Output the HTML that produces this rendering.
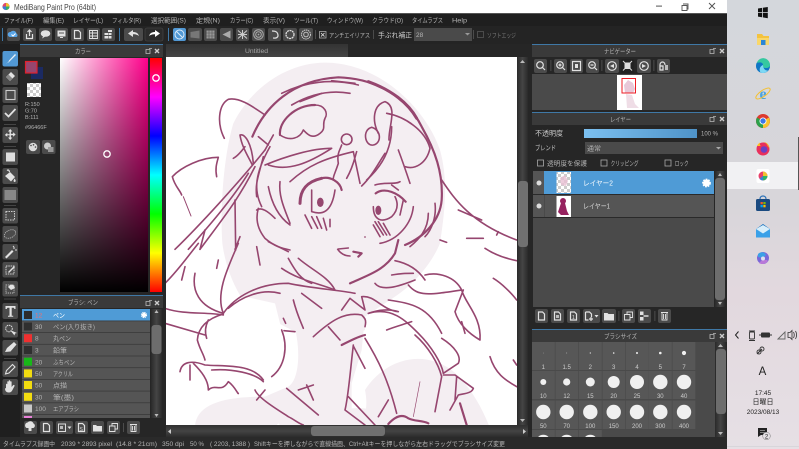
<!DOCTYPE html>
<html><head><meta charset="utf-8"><style>
html,body{margin:0;padding:0;width:799px;height:449px;overflow:hidden;background:#262626}
svg{display:block;position:absolute;left:0;top:0;filter:blur(.3px)}
text{font-family:"Liberation Sans","Noto Sans CJK JP",sans-serif;font-size:6.5px;fill:#b4b4b4}
.b{fill:#4b4b4b}
.i{fill:#e2e2e2}
.s{fill:none;stroke:#e2e2e2;stroke-width:1.2}
.d{fill:none;stroke:#96466f;stroke-width:4.8;stroke-linecap:round;stroke-linejoin:round}
.d.t{stroke-width:9}
.d.m{stroke-width:6.5}
.sep{fill:#555}
.hd{fill:#3a3a3a}
.bl{fill:#3f78a6}
.z{font-size:6px;fill:#ccc}
</style></head><body>
<svg width="799" height="449" viewBox="0 0 799 449" xmlns="http://www.w3.org/2000/svg">
<defs>
<linearGradient id="tb" x1="0" y1="0" x2="0" y2="1"><stop offset="0" stop-color="#d4d7dc"/><stop offset=".45" stop-color="#d8d6da"/><stop offset=".65" stop-color="#e2d8de"/><stop offset="1" stop-color="#e6e0e5"/></linearGradient>
<linearGradient id="w" x1="0" y1="0" x2="1" y2="0"><stop offset="0" stop-color="#fff"/><stop offset="1" stop-color="#ff008b"/></linearGradient>
<linearGradient id="k" x1="0" y1="0" x2="0" y2="1"><stop offset="0" stop-color="#000" stop-opacity="0"/><stop offset="1" stop-color="#000"/></linearGradient>
<linearGradient id="h" x1="0" y1="0" x2="0" y2="1"><stop offset="0" stop-color="#f00"/><stop offset=".1667" stop-color="#f0f"/><stop offset=".3333" stop-color="#00f"/><stop offset=".5" stop-color="#0ff"/><stop offset=".6667" stop-color="#0f0"/><stop offset=".8333" stop-color="#ff0"/><stop offset="1" stop-color="#f00"/></linearGradient>
<linearGradient id="op" x1="0" y1="0" x2="1" y2="0"><stop offset="0" stop-color="#7cc0f0"/><stop offset="1" stop-color="#4f93c8"/></linearGradient>
<linearGradient id="tab" x1="0" y1="0" x2="0" y2="1"><stop offset="0" stop-color="#333"/><stop offset="1" stop-color="#444"/></linearGradient>
<linearGradient id="vb" x1="0" y1="0" x2="1" y2="0"><stop offset="0" stop-color="#2a2a2a"/><stop offset=".5" stop-color="#454545"/><stop offset="1" stop-color="#2a2a2a"/></linearGradient>
<linearGradient id="hb" x1="0" y1="0" x2="0" y2="1"><stop offset="0" stop-color="#303030"/><stop offset=".5" stop-color="#444"/><stop offset="1" stop-color="#2c2c2c"/></linearGradient>
<pattern id="ck" width="6" height="6" patternUnits="userSpaceOnUse"><rect width="6" height="6" fill="#fff"/><rect width="3" height="3" fill="#ccc"/><rect x="3" y="3" width="3" height="3" fill="#ccc"/></pattern>
<clipPath id="cv"><rect x="166" y="57" width="351" height="368"/></clipPath>
<clipPath id="sz"><rect x="532" y="342" width="183" height="95"/></clipPath>
</defs>

<!-- window base -->
<rect width="727" height="449" fill="#262626"/>
<rect width="727" height="13.5" fill="#fff"/>
<rect y="13" width="727" height="1" fill="#555"/>
<rect y="14" width="727" height="12" fill="#1f1f1f"/>
<rect y="26" width="727" height="18" fill="#242424"/>

<!-- title -->
<circle cx="6" cy="6.500" r="3.600" fill="#e04a6a"/><path d="M6 3a3.600 3.600 0 0 1 3.500 3.500H6z" fill="#f2c230"/><path d="M6 6.500h3.500A3.600 3.600 0 0 1 6 10z" fill="#2fb36b"/><path d="M6 6.500V10A3.600 3.600 0 0 1 2.500 6.500z" fill="#3c7fd8"/>
<text x="14" y="10" textLength="82" lengthAdjust="spacingAndGlyphs" style="font-size:8.500px;fill:#444">MediBang Paint Pro (64bit)</text>
<rect x="656" y="5.600" width="6" height="1" fill="#555"/>
<path d="M683 4h5v5h-1.400M682 5.500h5v5h-5z" fill="none" stroke="#555" stroke-width=".9"/>
<path d="M709 3l6 6M715 3l-6 6" stroke="#555" stroke-width="1" fill="none"/>

<!-- menu -->
<text x="4" y="22.500" textLength="29" lengthAdjust="spacingAndGlyphs">ファイル(F)</text><text x="43" y="22.500" textLength="21" lengthAdjust="spacingAndGlyphs">編集(E)</text><text x="73" y="22.500" textLength="30" lengthAdjust="spacingAndGlyphs">レイヤー(L)</text><text x="112" y="22.500" textLength="29" lengthAdjust="spacingAndGlyphs">フィルタ(R)</text><text x="151" y="22.500" textLength="35" lengthAdjust="spacingAndGlyphs">選択範囲(S)</text><text x="196" y="22.500" textLength="24" lengthAdjust="spacingAndGlyphs">定規(N)</text><text x="230" y="22.500" textLength="23" lengthAdjust="spacingAndGlyphs">カラー(C)</text><text x="263" y="22.500" textLength="22" lengthAdjust="spacingAndGlyphs">表示(V)</text><text x="294" y="22.500" textLength="24" lengthAdjust="spacingAndGlyphs">ツール(T)</text><text x="327" y="22.500" textLength="36" lengthAdjust="spacingAndGlyphs">ウィンドウ(W)</text><text x="372" y="22.500" textLength="31" lengthAdjust="spacingAndGlyphs">クラウド(O)</text><text x="412" y="22.500" textLength="31" lengthAdjust="spacingAndGlyphs">タイムラプス</text><text x="452" y="22.500" textLength="15" lengthAdjust="spacingAndGlyphs">Help</text>

<!-- main toolbar -->
<rect x="2" y="28" width="1" height="13" class="bl"/>
<rect x="7" y="28" width="13" height="13" rx="2" class="b"/><path d="M10 37a2.500 2.500 0 0 1 .5-5 3.400 3.400 0 0 1 6 1.500 2 2 0 0 1 0 3.500z" fill="#5aa5e6"/><path d="M11.500 34.500l1.500 1.500 2.500-2.500" stroke="#fff" fill="none"/>
<rect x="23" y="28" width="13" height="13" rx="2" class="b"/><path d="M26.500 34v4.500h6V34M29.500 36V30.500M27.500 32l2-2 2 2" class="s"/>
<rect x="39" y="28" width="13" height="13" rx="2" class="b"/><ellipse cx="45.500" cy="33.500" rx="4.800" ry="3.300" class="i"/><path d="M43 36l-.8 2.500 3-2z" class="i"/>
<rect x="55" y="28" width="13" height="13" rx="2" class="b"/><rect x="57.500" y="30.500" width="8" height="6" class="i"/><path d="M59 33h5" stroke="#555"/><path d="M60 37.500h3" stroke="#ddd"/>
<rect x="71" y="28" width="13" height="13" rx="2" class="b"/><path d="M74.500 30.500h4l2 2v6h-6z" class="s"/>
<rect x="87" y="28" width="13" height="13" rx="2" class="b"/><path d="M89.500 30.500h8v8h-8zM89.500 33h8M89.500 36h8M92.500 30.500v8" class="s" style="stroke-width:.9"/>
<rect x="102" y="28" width="13" height="13" rx="2" class="b"/><path d="M104.500 33h3.500v2h-3.500zM108.500 33h3v2h-3zM104.500 36h3.500v2.500h-3.500zM108.500 36h3v2.500h-3zM108 30h4v2h-4z" class="i"/>
<rect x="119" y="28" width="1" height="13" class="bl"/>
<rect x="124" y="28" width="19" height="13" rx="2" class="b"/><path d="M128 33.500l5-3.500v2c3 0 5 1 6 4-2-1.500-3.500-1.800-6-1.800V37z" class="i"/>
<rect x="145" y="28" width="18" height="13" rx="2" fill="#2b2b2b" stroke="#4a4a4a" stroke-width=".6"/><path d="M160 33.500l-5-3.500v2c-3 0-5 1-6 4 2-1.500 3.500-1.800 6-1.800V37z" fill="#fff"/>
<rect x="168" y="28" width="1" height="13" class="bl"/>
<rect x="173" y="28" width="13" height="13" rx="2" fill="#5198d4"/><circle cx="179.500" cy="34.500" r="4.500" fill="none" stroke="#dcecfa" stroke-width="1"/><path d="M176.500 31.500l6 6" stroke="#dcecfa"/>
<rect x="188" y="28" width="14" height="13" rx="2" class="b"/><path d="M190.500 32l9-1.500v8l-9-1z" fill="#777"/>
<rect x="204" y="28" width="13" height="13" rx="2" class="b"/><rect x="206.500" y="30.500" width="8" height="8" fill="#999"/><path d="M209 30.500v8M212 30.500v8M206.500 33h8M206.500 36h8" stroke="#555" stroke-width=".6"/>
<rect x="220" y="28" width="13" height="13" rx="2" class="b"/><path d="M222.500 34.500l8-4v8z" fill="#aaa"/>
<rect x="236" y="28" width="13" height="13" rx="2" class="b"/><path d="M238 30.500l9 8M247 30.500l-9 8M242.500 30v9M238 34.500h9" stroke="#ccc" stroke-width="1"/>
<rect x="252" y="28" width="13" height="13" rx="2" class="b"/><circle cx="258.500" cy="34.500" r="4.800" fill="none" stroke="#aaa"/><circle cx="258.500" cy="34.500" r="2.800" fill="none" stroke="#aaa"/><circle cx="258.500" cy="34.500" r=".9" fill="#aaa"/>
<rect x="268" y="28" width="13" height="13" rx="2" class="b"/><path d="M272 31c5 0 6 2 6 5-1 3-4 2-5 2" fill="none" stroke="#ddd" stroke-width="1.200"/>
<rect x="283" y="28" width="14" height="13" rx="2" class="b"/><circle cx="290" cy="34.500" r="4" fill="none" stroke="#ddd" stroke-width="1.300" stroke-dasharray="2 .6"/>
<rect x="299" y="28" width="14" height="13" rx="2" class="b"/><circle cx="306" cy="34.500" r="4.500" fill="none" stroke="#ccc" stroke-width="1" stroke-dasharray="1.500 .6"/><circle cx="306" cy="34.500" r="2.300" fill="none" stroke="#ccc" stroke-width=".9"/>
<rect x="315" y="30" width=".8" height="9" class="sep"/>
<rect x="319.500" y="31.500" width="6.500" height="6.500" fill="none" stroke="#aaa" stroke-width=".8"/><path d="M321 33l3.500 3.500M324.500 33L321 36.500" stroke="#ccc" stroke-width=".9"/>
<text x="329" y="37.500" textLength="41" lengthAdjust="spacingAndGlyphs">アンチエイリアス</text>
<rect x="373" y="30" width=".8" height="9" class="sep"/>
<text x="378" y="37.500" textLength="34" lengthAdjust="spacingAndGlyphs" style="font-size:7px;fill:#ccc">手ぶれ補正</text>
<rect x="414" y="28" width="58" height="13" fill="#4a4a4a"/><text x="416" y="37" style="font-size:6.500px">28</text><path d="M465 33h5l-2.500 2.500z" fill="#999"/>
<rect x="473" y="30" width=".8" height="9" class="sep"/>
<rect x="477.500" y="31.500" width="6" height="6" fill="none" stroke="#555" stroke-width=".8"/>
<text x="487" y="37.500" textLength="29" lengthAdjust="spacingAndGlyphs" style="fill:#777">ソフトエッジ</text>

<!-- left tool column -->
<rect x="0" y="44" width="20" height="393" fill="#1f1f1f"/>
<rect x="2.500" y="51" width="15.500" height="15.500" rx="2" fill="#5198d4"/><path d="M6 63c2 0 2.500-1 3-2.500L15 54l1 1-6.500 6.500C8.500 62.500 7.500 63.500 6 63z" fill="#e9f3fb"/>
<rect x="2.500" y="69" width="15.500" height="16" rx="2" class="b"/><path d="M6 77l5-5 4 4-5 5z" class="i"/><path d="M6 77l2.500-2.500 4 4L10 81z" fill="#888"/>
<rect x="2.500" y="87" width="15.500" height="16" rx="2" class="b"/><rect x="6" y="90.500" width="9" height="9" fill="none" stroke="#ccc" stroke-width="1.100"/>
<rect x="2.500" y="105" width="15.500" height="16" rx="2" class="b"/><path d="M5 113l3.500 3.500L15.500 109" fill="none" stroke="#e2e2e2" stroke-width="1.800"/>
<rect x="4" y="124" width="12" height="1" fill="#444"/>
<rect x="2.500" y="127" width="15.500" height="16" rx="2" class="b"/><path d="M10.200 129l2.200 2.500h-1.500v2.200h2.200v-1.500l2.500 2.300-2.500 2.300v-1.500h-2.200v2.200h1.500l-2.200 2.500-2.200-2.500h1.500v-2.200H7.300v1.500L4.800 135l2.500-2.300v1.500h2.200V131.500H8z" class="i"/>
<rect x="4" y="146" width="12" height="1" fill="#444"/>
<rect x="2.500" y="149" width="15.500" height="16" rx="2" class="b"/><rect x="6" y="152.500" width="9" height="9" fill="#ddd"/>
<rect x="2.500" y="168" width="15.500" height="16" rx="2" class="b"/><path d="M5 176l5-4 5 5-4 4.500z" class="i"/><path d="M7 170.500c1-.8 2-.8 2.500 1.500" class="s"/><path d="M14.500 178.500c1 1.300 1.500 2 1 3s-2 .5-2-.7z" class="i"/>
<rect x="2.500" y="187" width="15.500" height="16" rx="2" class="b"/><rect x="4.500" y="190" width="11.500" height="10" fill="#888"/>
<rect x="4" y="205" width="12" height="1" fill="#444"/>
<rect x="2.500" y="208" width="15.500" height="15.500" rx="2" class="b"/><rect x="6" y="211.500" width="8.500" height="8.500" fill="none" stroke="#ccc" stroke-dasharray="1.500 1"/>
<rect x="2.500" y="226" width="15.500" height="16" rx="2" class="b"/><ellipse cx="10" cy="234" rx="6" ry="3.800" transform="rotate(-25 10 234)" fill="none" stroke="#bbb" stroke-width=".8" stroke-dasharray="1.300 .8"/>
<rect x="2.500" y="244" width="15.500" height="15.500" rx="2" class="b"/><path d="M5 257l7-7 1.500 1.500-7 7z" class="i"/><path d="M14 247v2M15 250h2M13 246l1 1" stroke="#ddd"/>
<rect x="2.500" y="262" width="15.500" height="15.500" rx="2" class="b"/><rect x="6" y="266" width="8" height="8" fill="none" stroke="#ccc" stroke-dasharray="1.500 .8"/><path d="M8 272l6-6 1 1-6 6z" class="i"/>
<rect x="2.500" y="281" width="15.500" height="15.500" rx="2" class="b"/><rect x="6" y="285" width="8" height="8" fill="none" stroke="#bbb" stroke-dasharray="1.200 .9"/><path d="M8 287c2-3 5-3 6-1l1 2-4 2z" class="i"/>
<rect x="4" y="298.500" width="12" height="1" fill="#444"/>
<rect x="2.500" y="303" width="15.500" height="16" rx="2" class="b"/><path d="M5.500 306h10v3h-1l-.7-1.200H11.700v8h1.500v1H8v-1h1.500v-8H7.400L6.700 309h-1.200z" class="i"/>
<rect x="2.500" y="322" width="15.500" height="15.500" rx="2" class="b"/><circle cx="9" cy="328.500" r="3.300" fill="none" stroke="#ddd" stroke-dasharray="1.500 .7"/><path d="M10 330l4.500 5.500 .5-2 2-.5z" class="i"/>
<rect x="2.500" y="340" width="15.500" height="15.500" rx="2" class="b"/><path d="M5 352l2-4 7-6 2.500 2.500-6 7z" class="i"/>
<rect x="4" y="358" width="12" height="1" fill="#444"/>
<rect x="2.500" y="361" width="15.500" height="16" rx="2" class="b"/><path d="M5.500 374l1-3.500 6-6 2.500 2.500-6 6z" fill="none" stroke="#e2e2e2" stroke-width="1.100"/>
<rect x="2.500" y="379" width="15.500" height="16" rx="2" class="b"/><path d="M6 388v-3.500c0-1 1.200-1 1.300 0V382c0-1 1.300-1 1.400 0v-1c0-1 1.400-1 1.500 0v1c0-1 1.300-1 1.400 0v5l1.500-1.800c.8-.8 2 .2 1.300 1.200l-2.500 4.600c-.8 1-1.500 1.500-3 1.500-2.500 0-3.900-1.500-3.900-4z" class="i"/>

<!-- colour panel -->
<rect x="20" y="44" width="143" height="1" class="bl"/>
<rect x="20" y="45" width="143" height="12" class="hd"/>
<text x="75" y="53.500" textLength="16" lengthAdjust="spacingAndGlyphs">カラー</text>
<path d="M146 49.500h4v4h-4zM149 48.500h3" stroke="#bbb" fill="none" stroke-width=".8"/><path d="M155 49l4 4M159 49l-4 4" stroke="#ccc" stroke-width="1.400"/>
<rect x="20" y="57" width="143" height="238" fill="#262626"/>
<rect x="31" y="67" width="12" height="12" fill="#1b2a62"/>
<rect x="25.500" y="61.500" width="11.500" height="11.500" fill="#96466f" stroke="#e0202c" stroke-width="1.200"/>
<rect x="27" y="83" width="14" height="14" fill="url(#ck)"/>
<text x="25" y="106" style="font-size:5.500px">R:150</text><text x="25" y="112.500" style="font-size:5.500px">G:70</text><text x="25" y="119" style="font-size:5.500px">B:111</text><text x="25" y="129" style="font-size:5.500px">#96466F</text>
<rect x="26" y="140" width="14" height="14" rx="2" class="b"/><circle cx="33" cy="147" r="4.300" fill="#ddd"/><circle cx="31" cy="145.500" r=".8" fill="#444"/><circle cx="33.500" cy="144.800" r=".8" fill="#444"/><circle cx="35.500" cy="147" r=".8" fill="#444"/>
<rect x="42" y="140" width="13.500" height="14" rx="2" class="b"/><circle cx="47.500" cy="146" r="3.500" fill="#ccc"/><rect x="48" y="147" width="5.500" height="5" fill="#999"/>
<rect x="60" y="58" width="88" height="234" fill="url(#w)"/>
<rect x="60" y="58" width="88" height="234" fill="url(#k)"/>
<rect x="150" y="58" width="12" height="234" fill="url(#h)"/>
<circle cx="156" cy="78" r="3.200" fill="none" stroke="#fff" stroke-width="1.300"/>
<circle cx="107" cy="154" r="3.200" fill="none" stroke="#fff" stroke-width="1.300"/>

<!-- brush panel -->
<rect x="20" y="295" width="143" height="1" class="bl"/>
<rect x="20" y="296" width="143" height="12" class="hd"/>
<text x="68" y="304.500" textLength="30" lengthAdjust="spacingAndGlyphs">ブラシ: ペン</text>
<path d="M146 301.500h4v4h-4zM149 300.500h3" stroke="#bbb" fill="none" stroke-width=".8"/><path d="M155 301l4 4M159 301l-4 4" stroke="#ccc" stroke-width="1.400"/>
<rect x="22" y="309" width="128" height="109" fill="#555"/>
<rect x="22" y="309" width="128" height="11.500" fill="#4f9bd6"/>
<g fill="#3a3a3a"><rect x="22" y="320.500" width="128" height=".8"/><rect x="22" y="332.200" width="128" height=".8"/><rect x="22" y="343.900" width="128" height=".8"/><rect x="22" y="355.600" width="128" height=".8"/><rect x="22" y="367.300" width="128" height=".8"/><rect x="22" y="379" width="128" height=".8"/><rect x="22" y="390.700" width="128" height=".8"/><rect x="22" y="402.400" width="128" height=".8"/><rect x="22" y="414.100" width="128" height=".8"/></g>
<rect x="24" y="311" width="8" height="8" fill="#2c2c2c"/><rect x="24" y="322.500" width="8" height="8" fill="#2f2f2f"/><rect x="24" y="334.200" width="8" height="8" fill="#f03030"/><rect x="24" y="346" width="8" height="8" fill="#2f2f2f"/><rect x="24" y="357.700" width="8" height="8" fill="#18b818"/><rect x="24" y="369.400" width="8" height="8" fill="#f2dc10"/><rect x="24" y="381" width="8" height="8" fill="#f2dc10"/><rect x="24" y="392.800" width="8" height="8" fill="#f2dc10"/><rect x="24" y="404.500" width="8" height="8" fill="#c8c8c8"/><rect x="24" y="416" width="8" height="2" fill="#e880d8"/>
<text x="35" y="317.500" style="fill:#f07070">12</text><text x="53" y="317.500" textLength="12" lengthAdjust="spacingAndGlyphs" style="fill:#fff">ペン</text>
<text x="35" y="329" style="fill:#bbb">30</text><text x="53" y="329" textLength="42" lengthAdjust="spacingAndGlyphs">ペン(入り抜き)</text>
<text x="35" y="340.700">8</text><text x="53" y="340.700" textLength="18" lengthAdjust="spacingAndGlyphs">丸ペン</text>
<text x="35" y="352.600">3</text><text x="53" y="352.600" textLength="14" lengthAdjust="spacingAndGlyphs">鉛筆</text>
<text x="35" y="364.300">20</text><text x="53" y="364.300" textLength="22" lengthAdjust="spacingAndGlyphs">ふちペン</text>
<text x="35" y="376">50</text><text x="53" y="376" textLength="20" lengthAdjust="spacingAndGlyphs">アクリル</text>
<text x="35" y="387.600">50</text><text x="53" y="387.600" textLength="14" lengthAdjust="spacingAndGlyphs">点描</text>
<text x="35" y="399.300">30</text><text x="53" y="399.300" textLength="21" lengthAdjust="spacingAndGlyphs">筆(墨)</text>
<text x="35" y="411">100</text><text x="53" y="411" textLength="26" lengthAdjust="spacingAndGlyphs">エアブラシ</text>
<circle cx="144" cy="315" r="2.300" fill="none" stroke="#fff" stroke-width="1.600" stroke-dasharray="1.200 .6"/><circle cx="144" cy="315" r="2" fill="#fff"/>
<rect x="151" y="309" width="11" height="109" fill="url(#vb)"/><path d="M154.500 313l2-3 2 3z" fill="#bbb"/><path d="M154.500 414l2 3 2-3z" fill="#bbb"/>
<rect x="151.500" y="325" width="10" height="29" rx="3" fill="#6d6d6d"/>
<rect x="24" y="421" width="13" height="13" rx="2" class="b"/><path d="M26.500 428a3 3 0 0 1 1-5.500 3.500 3.500 0 0 1 6 1 2.500 2.500 0 0 1 0 4.500h-2v3h-3v-3z" class="i"/>
<rect x="40" y="421" width="13" height="13" rx="2" class="b"/><path d="M43.500 423.500h4l2 2v6h-6z" class="s"/>
<rect x="56" y="421" width="17" height="13" rx="2" class="b"/><rect x="58.500" y="424" width="7" height="7.500" fill="none" stroke="#ddd"/><rect x="60" y="426" width="3" height="3" fill="#bbb"/><path d="M67.500 426.500h4l-2 2.500z" class="i"/>
<rect x="75" y="421" width="13" height="13" rx="2" class="b"/><path d="M78.500 423.500h4l2 2v6h-6z" class="s"/><text x="79.500" y="431" style="font-size:5px;fill:#ddd">S</text>
<rect x="91" y="421" width="13" height="13" rx="2" class="b"/><path d="M93 425h3l1 1h5v5.500h-9z" class="i"/>
<rect x="107" y="421" width="13" height="13" rx="2" class="b"/><path d="M109.500 426h5.500v5.500h-5.500zM112 426v-2.500h5.500V429h-2.500" class="s" style="stroke-width:.9"/>
<rect x="123" y="423" width=".8" height="9" class="sep"/>
<rect x="127" y="421" width="13" height="13" rx="2" class="b"/><path d="M130 424.500h7M131 425v6.500h5V425M132.500 426v4.500M134.500 426v4.500" class="s" style="stroke-width:.9"/>

<!-- tab + canvas -->
<rect x="166" y="44" width="182" height="13" fill="url(#tab)"/>
<text x="245" y="53" textLength="23" lengthAdjust="spacingAndGlyphs" style="fill:#a8a8a8">Untitled</text>
<rect x="163" y="44" width="3" height="393" fill="#262626"/>
<rect x="166" y="57" width="351" height="368" fill="#fff"/>
<g clip-path="url(#cv)">
<g transform="translate(165,50) scale(.33333)" fill="#f4eef2">
<path d="M480 38C640 38 780 170 825 300C850 390 840 480 825 580C800 640 750 700 690 740L600 800L600 840C560 860 500 860 470 850L420 860C340 820 280 790 240 760C200 700 180 640 172 580C165 480 175 320 205 220C260 110 370 38 480 38Z"/>
<path d="M380 770L600 800L590 900L560 1000L560 1130L490 1180L420 1197L340 1120L275 1190L200 1190C150 1190 90 1200 90 1130C95 1060 180 1040 300 1040L370 1010C400 990 405 920 395 860Z"/>
<path d="M600 1020C650 940 760 890 860 960C920 1010 970 1100 995 1197L540 1197C560 1150 620 1120 600 1020Z"/>
</g>
<g transform="translate(165,240) scale(.33333)" fill="#ffffff">
<path d="M175 225C130 235 100 270 105 330C120 390 240 420 320 410C365 385 370 320 350 270L330 190L240 170Z"/>
</g>
<g transform="translate(165,240) scale(.33333)" fill="#f4eef2">
<path d="M540 510C580 495 680 510 700 555L520 555Z"/>
</g>
<g transform="translate(165,50) scale(.33333)">
<path class="d" d="M178 265C155 220 160 165 190 148C225 140 270 175 300 195"/>
<path class="d" d="M155 380C150 355 155 340 160 322C110 322 50 350 22 380C30 410 45 420 50 435"/>
<path class="d" style="stroke-width:3" d="M55 440L78 498"/>
<path class="d m" d="M262 260C300 170 380 90 520 82C620 85 720 130 770 230C810 300 835 370 830 450C825 510 780 560 720 585"/>
<path class="d" d="M380 165C440 130 500 120 555 130"/>
<path class="d" d="M350 130C420 95 500 85 580 105"/>
<path class="d t" d="M610 95C680 120 730 160 755 205"/>
<path class="d" d="M500 92L570 100M405 155L470 130"/>
<path class="d m" d="M345 255C340 215 390 165 450 165"/>
<path class="d" d="M450 165C480 165 490 190 480 205C470 225 485 235 465 250C440 270 425 250 415 240C405 265 375 275 345 255"/>
<path class="d" d="M640 250C620 210 625 165 660 155C700 170 670 230 672 270"/>
<path class="d" d="M620 232C590 240 600 290 625 285C650 280 650 240 620 232"/>
<path class="d" d="M665 190C720 200 780 240 795 295C785 340 750 360 720 350"/>
<path class="d" d="M700 300C715 340 725 370 735 400"/>
<circle class="d" cx="545" cy="268" r="16"/>
<path class="d" d="M530 285C525 300 515 310 520 340C510 370 505 378 505 385"/>
<path class="d" d="M310 345C370 365 430 340 500 295C440 295 360 320 300 345"/>
<path class="d" d="M375 395C430 345 480 325 565 305L585 400M605 390C650 350 680 300 680 230"/>
<path class="d" d="M590 408C620 380 640 340 660 310M545 385C565 350 570 320 575 305"/>
<path class="d t" d="M405 460C405 420 425 395 470 385"/>
<path class="d m" d="M470 385C495 378 525 395 530 420"/>
<path class="d" d="M440 420L440 485C470 495 500 490 510 420"/>
<ellipse cx="466" cy="457" rx="10" ry="14" fill="#96466f"/>
<path class="d" d="M420 495L440 535M440 500L458 535M455 500L470 535M475 505L485 540M495 508L495 530"/>
<path class="d m" d="M632 430C660 410 700 430 722 455"/>
<path class="d" d="M630 405C660 395 690 405 705 395M680 405L700 420"/>
<path class="d" d="M625 470C625 510 650 520 680 500C700 480 700 460 690 440M715 450L705 495"/>
<ellipse cx="640" cy="481" rx="9" ry="14" fill="#96466f"/>
<path class="d" d="M630 515L655 555M640 515L665 555M655 520L675 555M625 525L645 560"/>
<path class="d" d="M645 580C700 570 740 520 745 470M790 490C790 540 760 570 735 590M810 460C815 500 800 540 780 560"/>
<path class="d" d="M830 390C870 450 920 520 1055 570M880 480L950 510M1000 545L995 555"/>
<path class="d" d="M905 565L955 565M825 570L845 577"/>
<path class="d" d="M300 300C220 400 100 530 30 598M250 370C200 450 130 530 70 598M270 350C220 450 170 510 105 598"/>
<path class="d" d="M240 290C225 310 215 320 205 325"/>
<path class="d" d="M225 255C240 250 260 280 265 340M225 255C230 290 250 320 262 345"/>
<path class="d" d="M280 260L310 285M325 255L300 300"/>
<path class="d" d="M315 290C270 370 265 420 290 470M295 320C280 380 270 400 275 440"/>
<path class="d" d="M310 410C320 460 340 500 375 525M345 395C340 440 360 480 375 520"/>
<path class="d" d="M280 475C270 510 280 540 300 565C330 590 350 595 375 600M275 480C290 470 310 485 330 505"/>
<path class="d" d="M210 450L212 600M120 540L105 598M225 560L210 598"/>
<path class="d" d="M520 597L550 594"/>
<circle cx="600" cy="561" r="2.500" fill="#96466f"/>
</g>
<g transform="translate(165,240) scale(.33333)">
<path class="d" d="M518 28C530 45 545 48 555 48"/>
<path class="d m" d="M565 35L590 40L580 50"/>
<path class="d m" d="M555 130C610 105 660 90 690 40L700 0"/>
<path class="d" d="M690 62C730 70 760 90 780 120M680 105C710 100 720 100 745 100M630 130C650 155 700 140 750 120"/>
<path class="d" d="M780 105C820 95 870 110 890 150C900 190 950 230 945 300M895 150L870 215C880 250 910 280 945 300M890 245L900 280"/>
<path class="d" d="M670 180C740 190 790 200 830 280M730 135C760 170 790 165 890 150"/>
<path class="d" d="M0 130C40 90 60 60 100 10M90 100C80 150 100 200 175 220C150 160 190 80 220 10M60 80L50 120M160 60L155 85"/>
<path class="d" d="M0 205C60 225 120 215 175 225M0 250L120 285M275 20L285 75"/>
<path class="d" d="M175 220C210 170 280 130 370 130C440 145 520 150 570 160M190 205C230 170 290 145 345 160"/>
<path class="d" d="M350 85C400 120 460 130 510 150M400 55C440 90 490 110 510 150M370 55C395 100 410 120 440 130M310 5L370 35"/>
<path class="d" d="M175 222C130 235 100 260 97 300C105 330 115 340 120 360M130 240C120 260 120 280 125 295"/>
<path class="d" d="M350 270C370 320 360 380 320 410M357 272L390 275M385 180C395 220 405 240 415 265M410 160L470 205M355 235L362 250"/>
<path class="d" d="M45 395C50 365 80 360 120 375C180 380 260 370 295 420M85 370C110 395 130 420 130 450C150 430 170 460 190 425C210 440 220 465 220 460"/>
<path class="d" d="M140 390C200 385 270 400 295 425M270 450C280 475 340 510 370 530C390 540 400 550 415 555M365 445L460 525M400 450L445 435M425 435L445 480M75 375L75 420M300 450L275 480"/>
<path class="d" d="M445 290C500 240 540 215 590 225C600 235 605 240 600 260M490 260L525 300"/>
<path class="d" d="M530 210L555 175L600 210L590 170C630 165 650 210 700 215M610 220C640 210 670 205 700 215"/>
<path class="d m" d="M530 315C560 300 580 290 600 285"/>
<path class="d" d="M565 315C555 400 550 470 540 510L600 555M600 295C640 360 670 420 695 520M565 318L600 385M550 470L630 555M670 480L640 530"/>
<path class="d m" d="M670 552C690 530 710 520 730 535C750 545 770 540 790 550"/>
<path class="d" d="M610 220C680 200 720 240 760 280C800 320 830 370 835 400M665 270C690 260 710 255 740 245"/>
<path class="d" d="M830 295C870 320 890 350 880 370L835 400M750 285C790 320 820 370 830 410L810 515"/>
<path class="d" d="M835 405L870 405L925 445C920 460 900 460 880 465L855 510M875 410L870 480"/>
<path class="d m" d="M885 490L905 555"/>
<path class="d" style="stroke-width:2" d="M765 425L745 530"/>
<path class="d" d="M985 115C1010 130 1040 160 1055 180M975 350C990 400 1020 420 1055 440M960 25C990 45 1020 55 1055 62M1045 360L1055 375"/>
</g>
</g>
<!-- canvas scrollbars -->
<rect x="517" y="57" width="11" height="368" fill="url(#vb)"/>
<path d="M520 63l2.500-3 2.500 3z" fill="#bbb"/><path d="M520 419l2.500 3 2.500-3z" fill="#bbb"/>
<rect x="518" y="181" width="10" height="66" rx="3" fill="#707070"/>
<rect x="166" y="425" width="362" height="12" fill="url(#hb)"/>
<path d="M171 429l-3 2.500 3 2.500z" fill="#ccc"/><path d="M523 429l3 2.500-3 2.500z" fill="#ccc"/>
<rect x="311" y="426" width="74" height="10" rx="3" fill="#707070"/>

<!-- status -->
<rect y="437" width="727" height="12" fill="#2a2a2a"/>
<text x="3" y="445.800" textLength="52" lengthAdjust="spacingAndGlyphs">タイムラプス録画中</text>
<text x="61" y="445.800" textLength="51" lengthAdjust="spacingAndGlyphs">2039 * 2893 pixel</text>
<text x="116" y="445.800" textLength="41" lengthAdjust="spacingAndGlyphs">(14.8 * 21cm)</text>
<text x="162" y="445.800" textLength="22" lengthAdjust="spacingAndGlyphs">350 dpi</text>
<text x="190" y="445.800" textLength="14" lengthAdjust="spacingAndGlyphs">50 %</text>
<text x="210" y="445.800" textLength="40" lengthAdjust="spacingAndGlyphs">( 2203, 1388 )</text>
<text x="254" y="445.800" textLength="251" lengthAdjust="spacingAndGlyphs">Shiftキーを押しながらで直線描画、Ctrl+Altキーを押しながら左右ドラッグでブラシサイズ変更</text>

<!-- navigator -->
<rect x="532" y="44" width="195" height="1" class="bl"/>
<rect x="532" y="45" width="195" height="12" class="hd"/>
<text x="604" y="53.500" textLength="32" lengthAdjust="spacingAndGlyphs">ナビゲーター</text>
<path d="M710 49.500h4v4h-4zM713 48.500h3" stroke="#bbb" fill="none" stroke-width=".8"/><path d="M720 49l4 4M724 49l-4 4" stroke="#ccc" stroke-width="1.400"/>
<rect x="532" y="57" width="195" height="17" fill="#262626"/>
<rect x="534" y="59" width="13" height="14" rx="2" class="b"/><circle cx="540" cy="65" r="3.300" class="s"/><path d="M542.500 67.500l2.500 2.500" class="s"/>
<rect x="550.500" y="60" width=".8" height="11" class="sep"/>
<rect x="554" y="59" width="13" height="14" rx="2" class="b"/><circle cx="560" cy="65" r="3.300" class="s"/><path d="M562.500 67.500l2.500 2.500M558.500 65h3M560 63.500v3" class="s"/>
<rect x="570" y="59" width="13" height="14" rx="2" class="b"/><path d="M572.500 61.500h8v9h-8z" class="s"/><path d="M575 64h3v4h-3z" class="i"/>
<rect x="586" y="59" width="13" height="14" rx="2" class="b"/><circle cx="592" cy="65" r="3.300" class="s"/><path d="M594.500 67.500l2.500 2.500M590.500 65h3" class="s"/>
<rect x="601.500" y="60" width=".8" height="11" class="sep"/>
<rect x="605" y="59" width="14" height="14" rx="2" class="b"/><circle cx="612" cy="66" r="4.300" class="s"/><path d="M610 66l4-2v4z" class="i"/>
<rect x="621" y="59" width="13" height="14" rx="2" fill="#222"/><rect x="624.500" y="62.500" width="6" height="6.500" fill="#ddd"/><path d="M623 61l2 2M632 61l-2 2M623 70.500l2-2M632 70.500l-2-2" stroke="#ddd"/>
<rect x="637" y="59" width="14" height="14" rx="2" class="b"/><circle cx="644" cy="66" r="4.300" class="s"/><path d="M646 66l-4-2v4z" class="i"/>
<rect x="653.500" y="60" width=".8" height="11" class="sep"/>
<rect x="657" y="59" width="13" height="14" rx="2" class="b"/><path d="M660 70v-5c0-4 5-4 5 0M660 66h3v4h-3z" class="s"/><rect x="665" y="65" width="3" height="5" fill="#bbb"/>
<rect x="532" y="74" width="195" height="36" fill="#4a4a4a"/>
<rect x="617" y="75" width="25" height="35" fill="#fff"/>
<path d="M624 85l4-5 5 3 2 6-2 4h-8z" fill="#e8c8d8"/><path d="M626 94l6 1 3 9 4 4h-12z" fill="#efdde6"/>
<rect x="622" y="78.500" width="13.500" height="14.500" fill="none" stroke="#ee1c25" stroke-width="1"/>

<!-- layers -->
<rect x="532" y="112" width="195" height="1" class="bl"/>
<rect x="532" y="113" width="195" height="12" class="hd"/>
<text x="610" y="121.500" textLength="21" lengthAdjust="spacingAndGlyphs">レイヤー</text>
<path d="M710 117.500h4v4h-4zM713 116.500h3" stroke="#bbb" fill="none" stroke-width=".8"/><path d="M720 117l4 4M724 117l-4 4" stroke="#ccc" stroke-width="1.400"/>
<rect x="532" y="125" width="195" height="45" fill="#262626"/>
<text x="535" y="135.500" textLength="28" lengthAdjust="spacingAndGlyphs" style="font-size:7px;fill:#ccc">不透明度</text>
<rect x="584" y="129" width="113" height="9" fill="url(#op)"/>
<text x="701" y="135.500" textLength="17" lengthAdjust="spacingAndGlyphs">100 %</text>
<text x="535" y="150" textLength="21" lengthAdjust="spacingAndGlyphs" style="fill:#ccc">ブレンド</text>
<rect x="585" y="142" width="138" height="12" fill="#4a4a4a"/><text x="587" y="150.500" textLength="14" lengthAdjust="spacingAndGlyphs">通常</text><path d="M716 147h5l-2.500 2.500z" fill="#aaa"/>
<rect x="537.500" y="160" width="6" height="6" fill="none" stroke="#aaa" stroke-width=".8"/><text x="547" y="165.500" textLength="40" lengthAdjust="spacingAndGlyphs">透明度を保護</text>
<rect x="601" y="160" width="6" height="6" fill="none" stroke="#aaa" stroke-width=".8"/><text x="610.600" y="165.500" textLength="28" lengthAdjust="spacingAndGlyphs">クリッピング</text>
<rect x="665" y="160" width="6" height="6" fill="none" stroke="#aaa" stroke-width=".8"/><text x="674.700" y="165.500" textLength="14" lengthAdjust="spacingAndGlyphs">ロック</text>
<rect x="533" y="171" width="181" height="136" fill="#4a4a4a"/>
<rect x="544" y="171" width="170" height="23" fill="#4f9bd6"/>
<rect x="533" y="194" width="181" height="1" fill="#2a2a2a"/>
<rect x="533" y="195" width="181" height="22" fill="#555"/>
<rect x="533" y="217" width="181" height="1" fill="#2a2a2a"/>
<rect x="533" y="171" width="11" height="23" fill="#555"/>
<rect x="544" y="195" width=".6" height="22" fill="#444"/>
<circle cx="539" cy="183" r="2.500" fill="#ddd"/><circle cx="539" cy="206" r="2.500" fill="#ddd"/>
<rect x="556.500" y="172" width="14.500" height="21" fill="url(#ck)"/>
<path d="M560 178l5-3 3 6-2 5-5-1z" fill="#e9bfd3" opacity=".8"/>
<rect x="556.500" y="196" width="14.500" height="21" fill="#fff"/>
<circle cx="563" cy="201" r="3" fill="#96225f"/><path d="M561 203h4l2 8 2 4h-8l-3-3z" fill="#96225f"/>
<text x="583" y="185.500" textLength="30" lengthAdjust="spacingAndGlyphs" style="font-size:7px;fill:#fff">レイヤー2</text>
<text x="583" y="208.500" textLength="27" lengthAdjust="spacingAndGlyphs" style="font-size:7px;fill:#ddd">レイヤー1</text>
<circle cx="706.500" cy="183" r="3.500" fill="#fff" stroke="#fff" stroke-width="1.800" stroke-dasharray="1.600 1"/>
<rect x="715" y="171" width="10" height="136" fill="url(#vb)"/><path d="M718 176l2-3 2 3z" fill="#bbb"/><path d="M718 302l2 3 2-3z" fill="#bbb"/>
<rect x="715" y="178" width="10" height="122" rx="3" fill="#6d6d6d"/>
<rect x="535" y="309" width="13" height="14" rx="2" class="b"/><path d="M538.500 312h4l2 2v6h-6z" class="s"/>
<rect x="551" y="309" width="13" height="14" rx="2" class="b"/><path d="M554.500 312h4l2 2v6h-6z" class="s"/><rect x="556" y="315" width="3" height="3" fill="#bbb"/>
<rect x="567" y="309" width="13" height="14" rx="2" class="b"/><path d="M570.500 312h4l2 2v6h-6z" class="s"/><text x="572" y="319" style="font-size:5px;fill:#ddd">1</text>
<rect x="583" y="309" width="17" height="14" rx="2" class="b"/><path d="M585.500 312h4l2 2v3M585.500 312v8h3" class="s"/><path d="M589 319h4M591 317v4" class="s"/><path d="M594.500 315h4l-2 2.500z" class="i"/>
<rect x="602" y="309" width="14" height="14" rx="2" class="b"/><path d="M604 313h3.500l1 1h5.500v6.500h-10z" class="i"/>
<rect x="618.500" y="311" width=".8" height="10" class="sep"/>
<rect x="622" y="309" width="13" height="14" rx="2" class="b"/><path d="M624.500 314.500h5.500v5.500h-5.500zM627 314.500V312h5.500v5.500H630" class="s" style="stroke-width:.9"/>
<rect x="638" y="309" width="13" height="14" rx="2" class="b"/><rect x="640" y="311.500" width="3.500" height="3.500" class="i"/><rect x="640" y="317" width="3.500" height="3.500" class="i"/><path d="M643.500 316h5" stroke="#ddd" stroke-width="1.500"/>
<rect x="654.500" y="311" width=".8" height="10" class="sep"/>
<rect x="658" y="309" width="13" height="14" rx="2" class="b"/><path d="M661 312.500h7M662 313v7h5v-7M663.500 314v5M665.500 314v5" class="s" style="stroke-width:.9"/>

<!-- brush sizes -->
<rect x="532" y="329" width="195" height="1" class="bl"/>
<rect x="532" y="330" width="195" height="12" class="hd"/>
<text x="604" y="338.500" textLength="33" lengthAdjust="spacingAndGlyphs">ブラシサイズ</text>
<path d="M710 334.500h4v4h-4zM713 333.500h3" stroke="#bbb" fill="none" stroke-width=".8"/><path d="M720 334l4 4M724 334l-4 4" stroke="#ccc" stroke-width="1.400"/>
<rect x="532" y="342" width="183" height="95" fill="#4a4a4a"/>
<g clip-path="url(#sz)">
<g fill="#575757">
<rect x="532" y="342" width="22.800" height="28"/><rect x="555.500" y="342" width="22.800" height="28"/><rect x="579" y="342" width="22.800" height="28"/><rect x="602.500" y="342" width="22.800" height="28"/><rect x="626" y="342" width="22.800" height="28"/><rect x="649" y="342" width="22.800" height="28"/><rect x="672.500" y="342" width="22.800" height="28"/>
<rect x="532" y="371" width="22.800" height="28"/><rect x="555.500" y="371" width="22.800" height="28"/><rect x="579" y="371" width="22.800" height="28"/><rect x="602.500" y="371" width="22.800" height="28"/><rect x="626" y="371" width="22.800" height="28"/><rect x="649" y="371" width="22.800" height="28"/><rect x="672.500" y="371" width="22.800" height="28"/>
<rect x="532" y="400.500" width="22.800" height="28.500"/><rect x="555.500" y="400.500" width="22.800" height="28.500"/><rect x="579" y="400.500" width="22.800" height="28.500"/><rect x="602.500" y="400.500" width="22.800" height="28.500"/><rect x="626" y="400.500" width="22.800" height="28.500"/><rect x="649" y="400.500" width="22.800" height="28.500"/><rect x="672.500" y="400.500" width="22.800" height="28.500"/>
<rect x="532" y="430" width="22.800" height="7"/><rect x="555.500" y="430" width="22.800" height="7"/><rect x="579" y="430" width="22.800" height="7"/>
</g>
<g fill="#f0f0f0">
<circle cx="543.300" cy="353" r=".3"/><circle cx="566.700" cy="353" r=".4"/><circle cx="590.300" cy="353" r=".6"/><circle cx="613.700" cy="353" r=".8"/><circle cx="637" cy="353" r="1"/><circle cx="660.300" cy="353" r="1.300"/><circle cx="684" cy="353" r="2.100"/>
<circle cx="543.300" cy="382" r="3"/><circle cx="566.700" cy="382" r="3.600"/><circle cx="590.300" cy="382" r="4.500"/><circle cx="613.700" cy="382" r="6"/><circle cx="637" cy="382" r="7"/><circle cx="660.300" cy="382" r="7.200"/><circle cx="684" cy="382" r="7.200"/>
<circle cx="543.300" cy="412" r="7.200"/><circle cx="566.700" cy="412" r="7.200"/><circle cx="590.300" cy="412" r="7.200"/><circle cx="613.700" cy="412" r="7.200"/><circle cx="637" cy="412" r="7.200"/><circle cx="660.300" cy="412" r="7.200"/><circle cx="684" cy="412" r="7.200"/>
<circle cx="543.300" cy="442" r="7.200"/><circle cx="566.700" cy="442" r="7.200"/><circle cx="590.300" cy="442" r="7.200"/>
</g>
</g>
<text x="543.300" y="369" text-anchor="middle" class="z">1</text><text x="566.700" y="369" text-anchor="middle" class="z">1.5</text><text x="590.300" y="369" text-anchor="middle" class="z">2</text><text x="613.700" y="369" text-anchor="middle" class="z">3</text><text x="637" y="369" text-anchor="middle" class="z">4</text><text x="660.300" y="369" text-anchor="middle" class="z">5</text><text x="684" y="369" text-anchor="middle" class="z">7</text>
<text x="543.300" y="398" text-anchor="middle" class="z">10</text><text x="566.700" y="398" text-anchor="middle" class="z">12</text><text x="590.300" y="398" text-anchor="middle" class="z">15</text><text x="613.700" y="398" text-anchor="middle" class="z">20</text><text x="637" y="398" text-anchor="middle" class="z">25</text><text x="660.300" y="398" text-anchor="middle" class="z">30</text><text x="684" y="398" text-anchor="middle" class="z">40</text>
<text x="543.300" y="428" text-anchor="middle" class="z">50</text><text x="566.700" y="428" text-anchor="middle" class="z">70</text><text x="590.300" y="428" text-anchor="middle" class="z">100</text><text x="613.700" y="428" text-anchor="middle" class="z">150</text><text x="637" y="428" text-anchor="middle" class="z">200</text><text x="660.300" y="428" text-anchor="middle" class="z">300</text><text x="684" y="428" text-anchor="middle" class="z">400</text>
<rect x="715" y="342" width="11" height="95" fill="url(#vb)"/><path d="M718 347l2.500-3 2.500 3z" fill="#bbb"/><path d="M718 432l2.500 3 2.500-3z" fill="#bbb"/>
<rect x="716" y="349" width="10" height="65" rx="3" fill="#6d6d6d"/>

<!-- taskbar -->
<rect x="727" width="72" height="449" fill="url(#tb)"/>
<rect x="727" y="162" width="72" height="27" fill="#f1f1f3"/>
<rect x="798" y="137" width="1" height="53" fill="#555"/>
<path d="M758 8.500l4-.6v4.300h-4zM762.800 7.800l5-.8v5.200h-5zM758 13h4v4.200l-4-.6zM762.800 13h5v5.200l-5-.8z" fill="#111"/>
<path d="M757 34h5l1.500 2H769v9h-12z" fill="#f4c33f"/><rect x="757" y="38" width="12" height="7" fill="#f9d76a"/><rect x="761" y="40" width="4.500" height="5" fill="#2a86d6"/>
<circle cx="763" cy="66" r="7" fill="#0f76c4"/><path d="M757 63c1-4 5-5 7-4.800 3.500.4 6 3.500 6 6.800 0 2-2 3-4 3-2.500 0-3-1-3-2 .5-3-2-4.500-6-3z" fill="#35c8a0"/><path d="M763 65c0 3 2 6 5 5.500-2 2.500-5 3-7.500 2-1.500-2.500-1-6 2.500-7.500z" fill="#7ed8f4"/>
<text x="763" y="99" text-anchor="middle" style="font-size:16px;font-weight:bold;fill:#4aa3e0;font-family:'Liberation Serif',serif">e</text><ellipse cx="763" cy="93.500" rx="8.500" ry="3" transform="rotate(-35 763 93.500)" fill="none" stroke="#f4c030" stroke-width="1"/>
<circle cx="763" cy="121" r="7" fill="#dd3a2f"/><path d="M763 121L769 117.500A7 7 0 0 1 763 128z" fill="#f8c42c"/><path d="M763 121V128A7 7 0 0 1 757 117.500z" fill="#2ba24c"/><circle cx="763" cy="121" r="3.500" fill="#fff"/><circle cx="763" cy="121" r="2.700" fill="#3b78e7"/>
<circle cx="763" cy="149" r="6.500" fill="#e8305c"/><path d="M763 142c4 0 6.500 3 6.500 7 0-1-1-2-2-3-.5-2-2-3.500-4.500-4z" fill="#ffa820"/><circle cx="764" cy="149.500" r="3.300" fill="#6a3fc4"/><path d="M757 146c1-2 2-3 3-3.500-.5 2 0 3 1 3.500z" fill="#ffc020"/>
<rect x="756.500" y="169" width="13" height="14" rx="2" fill="#fff"/><circle cx="763" cy="176" r="4.500" fill="#e8406a"/><path d="M763 171.500a4.500 4.500 0 0 1 4.500 4.500H763z" fill="#f2c230"/><path d="M763 176h4.500a4.500 4.500 0 0 1-4.500 4.500z" fill="#2fb36b"/><path d="M763 176v4.500a4.500 4.500 0 0 1-3.500-1.700z" fill="#3c7fd8"/>
<rect x="756" y="199" width="14" height="12" rx="1.500" fill="#1a4a80"/><path d="M760 199c0-4 6-4 6 0" fill="none" stroke="#2c72b8" stroke-width="1.200"/><rect x="760.500" y="202" width="2.300" height="2.300" fill="#f05a28"/><rect x="763.300" y="202" width="2.300" height="2.300" fill="#7fba00"/><rect x="760.500" y="205" width="2.300" height="2.300" fill="#00a4ef"/><rect x="763.300" y="205" width="2.300" height="2.300" fill="#ffb900"/>
<path d="M756 229l7-5 7 5v8h-14z" fill="#0f6cbd"/><rect x="756" y="229" width="14" height="8.500" fill="#3aa0e8"/><path d="M756 229l7 4.500 7-4.500-7-4z" fill="#d8eefa"/>
<circle cx="763" cy="258" r="6" fill="#7a68d8"/><path d="M758 254c3-3 7-2 8 1l-3 3-5-1z" fill="#3ba0e6"/><path d="M768 261c-2 3-6 4-9 2l3-3 5 0z" fill="#b878d8"/><circle cx="763" cy="258.500" r="2" fill="#dfe0ee"/>
<path d="M738.500 331.500l-3 3.500 3 3.500" fill="none" stroke="#222" stroke-width="1"/>
<rect x="749.500" y="332" width="5" height="7" rx="1" fill="none" stroke="#333" stroke-width=".9"/><path d="M749 331h6M749 340.500h6" stroke="#333"/>
<rect x="761" y="332.500" width="9" height="5" rx="1" fill="#333"/><path d="M760 334v2M771 334v2" stroke="#333"/>
<path d="M778 339l7-7v7z" fill="none" stroke="#666" stroke-width=".9"/><path d="M788 332.500h2l2-2v9l-2-2h-2zM793.500 332c1 2 1 4 0 6M795.500 331c1.500 2.500 1.500 5 0 8" fill="none" stroke="#333" stroke-width=".8"/>
<circle cx="759" cy="352" r="2" fill="none" stroke="#333" stroke-width=".9"/><circle cx="762" cy="349" r="2" fill="none" stroke="#333" stroke-width=".9"/><path d="M757 354l5-5" stroke="#333"/>
<text x="762.500" y="375" text-anchor="middle" style="font-size:11.500px;fill:#222">A</text>
<text x="763" y="395" text-anchor="middle" style="font-size:6.500px;fill:#222">17:45</text>
<text x="763" y="404" text-anchor="middle" style="font-size:7px;fill:#222">日曜日</text>
<text x="763" y="414" text-anchor="middle" style="font-size:6.500px;fill:#222">2023/08/13</text>
<path d="M758 428h9v7h-6l-3 2z" fill="#222"/><path d="M760 430.500h5M760 432.500h5" stroke="#ddd" stroke-width=".5"/>
<circle cx="766.500" cy="436" r="3.800" fill="#e4e0e4" stroke="#777" stroke-width=".5"/><text x="766.500" y="438.500" text-anchor="middle" style="font-size:6px;fill:#222">2</text>
<rect x="727" y="446" width="72" height=".6" fill="#cfcfd3"/>
</svg>
</body></html>
